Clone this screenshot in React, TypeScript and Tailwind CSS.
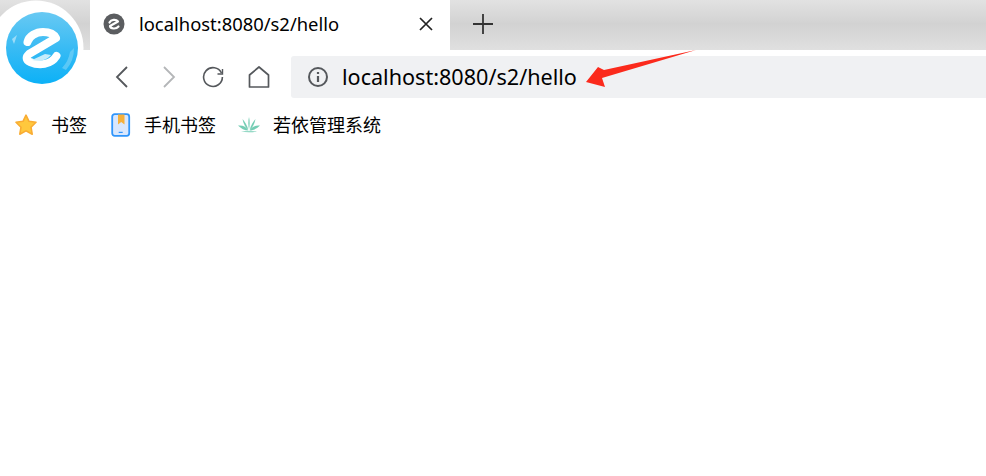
const font = "font-['Noto_Sans','Noto_Sans_CJK_SC',sans-serif]"

const Logo = () => (
  <svg className="absolute left-0 top-0" width="90" height="100" viewBox="0 0 90 100">
    <defs>
      <linearGradient id="ball" x1="0" y1="0" x2="0" y2="1">
        <stop offset="0" stopColor="#68c9f3" />
        <stop offset="0.5" stopColor="#39bbf4" />
        <stop offset="1" stopColor="#0cb1f7" />
      </linearGradient>
    </defs>
    <circle cx="36" cy="48" r="47.5" fill="#fff" />
    <circle cx="42" cy="48" r="36" fill="url(#ball)" />
    <path d="M12 39 L17 35 L14 44 Z" fill="#9bdcf8" />
    <path d="M66 70 A33 33 0 0 0 74 48 L70 52 A30 30 0 0 1 62 68 Z" fill="#7fd3f7" opacity="0.6" />
    <path
      d="M27.5 42 C29 36 36 32 43 32 C49 32 54 34 56 38 L29 54 C25.5 57 26 60.5 30 62 C39 66 51 65 56.5 56"
      fill="none"
      stroke="#fff"
      strokeWidth="8"
      strokeLinecap="round"
      strokeLinejoin="round"
    />
    <path d="M32 60 C40 62 47 60 51 55 L45 54 Z" fill="#c6ecfb" />
  </svg>
)

const Favicon = () => (
  <svg width="22" height="22" viewBox="0 0 22 22">
    <circle cx="11" cy="11" r="10.5" fill="#5b5d60" />
    <path
      d="M6.5 9.5 C8 6.5 13 6 15 8.5 L7 13 C7.5 16 13 16.5 15.5 13.5"
      fill="none"
      stroke="#fff"
      strokeWidth="2.2"
      strokeLinecap="round"
      strokeLinejoin="round"
    />
  </svg>
)

const Star = () => (
  <svg width="24" height="24" viewBox="0 0 24 24">
    <path
      d="M12 2.2 L15 8.3 L22 9.3 L17 14.2 L18.2 21.2 L12 17.9 L5.8 21.2 L7 14.2 L2 9.3 L9 8.3 Z"
      fill="#ffc83d"
      stroke="#f9ac33"
      strokeWidth="1.6"
      strokeLinejoin="round"
    />
  </svg>
)

const PhoneMark = () => (
  <svg width="20" height="24" viewBox="0 0 20 24">
    <rect x="1.2" y="1.2" width="17" height="21.6" rx="2.5" fill="#d9e7fd" stroke="#2f95fb" strokeWidth="1.8" />
    <path d="M7 1.5 H13.5 V11.5 L10.2 9 L7 11.5 Z" fill="#f6b03a" />
    <rect x="7.7" y="18.8" width="4" height="1.2" fill="#2f95fb" />
  </svg>
)

const Plant = () => (
  <svg width="24" height="18" viewBox="0 0 24 18">
    <g fill="#74cdb4">
      <path d="M1 9.5 C6 9 9.5 11 11.5 14.5 C7.5 14.5 4 12.5 1 9.5 Z" />
      <path d="M23 9.5 C18 9 14.5 11 12.5 14.5 C16.5 14.5 20 12.5 23 9.5 Z" />
      <path d="M5.5 3 C8 6 10 9 11.3 13.5 C8.5 12 6.5 8 5.5 3 Z" />
      <path d="M18.5 3 C16 6 14 9 12.7 13.5 C15.5 12 17.5 8 18.5 3 Z" />
      <path d="M12 1 C13 5 12.8 9.5 12 13.5 C11.2 9.5 11 5 12 1 Z" />
      <path d="M4 15.6 C9 15 15 15 20 15.6 C15 16.6 9 16.6 4 15.6 Z" />
    </g>
  </svg>
)

const NavIcons = () => (
  <div className="flex w-[291px] items-center">
    <svg className="ml-[114px]" width="16" height="22" viewBox="0 0 16 22" fill="none" stroke="#55585c" strokeWidth="1.8">
      <path d="M13 1 L3 11 L13 21" />
    </svg>
    <svg className="ml-[31px]" width="16" height="22" viewBox="0 0 16 22" fill="none" stroke="#b4b6b8" strokeWidth="1.8">
      <path d="M3 1 L13 11 L3 21" />
    </svg>
    <svg className="ml-[25px]" width="22" height="22" viewBox="0 0 22 22" fill="none" stroke="#55585c" strokeWidth="1.6">
      <path d="M19.5 7 A9.4 9.4 0 1 0 20.4 11" />
      <path d="M20.5 3 V8 H15.5" strokeWidth="1.4" />
    </svg>
    <svg className="ml-[24px]" width="22" height="22" viewBox="0 0 22 22" fill="none" stroke="#55585c" strokeWidth="1.7">
      <path d="M1.5 9 L11 1 L20.5 9 V21 H1.5 Z" strokeLinejoin="round" />
    </svg>
  </div>
)

const Arrow = () => (
  <svg className="absolute left-[580px] top-[46px]" width="120" height="46" viewBox="0 0 120 46">
    <path d="M116 4 L24 24 L18 21 L6 36 L25 41 L22 32 Z" fill="#fb2a1c" />
  </svg>
)

export default function App() {
  return (
    <div className={`relative h-[476px] w-[986px] overflow-hidden bg-white text-black ${font}`}>
      <div className="flex h-[50px] bg-[linear-gradient(180deg,#e2e2e2_0%,#d2d2d2_48%,#e0e0e0_100%)]">
        <div className="w-[90px]" />
        <div className="flex w-[360px] items-center bg-white pb-[2px] pl-[13px] text-[18.4px]">
          <Favicon />
          <span className="ml-[14px] leading-none">localhost:8080/s2/hello</span>
          <svg className="ml-auto mr-[17px]" width="14" height="14" viewBox="0 0 14 14" stroke="#222" strokeWidth="1.7">
            <path d="M1 1 L13 13 M13 1 L1 13" />
          </svg>
        </div>
        <svg className="ml-[23px] mt-[14px]" width="20" height="20" viewBox="0 0 20 20" stroke="#333" strokeWidth="1.8">
          <path d="M10 0 V20 M0 10 H20" />
        </svg>
      </div>

      <div className="mt-[6px] flex h-[42px]">
        <NavIcons />
        <div className="flex flex-1 items-center rounded-l-[3px] bg-[#f0f1f3] pl-[17px]">
          <svg width="20" height="20" viewBox="0 0 20 20" fill="none" stroke="#55585c" strokeWidth="2">
            <circle cx="10" cy="10" r="9" />
            <path d="M10 9 V15 M10 5 V7" strokeWidth="2.2" />
          </svg>
          <span className="ml-[14px] text-[21.6px] leading-none">localhost:8080/s2/hello</span>
        </div>
      </div>

      <div className="mt-[9px] flex h-[36px] items-center pl-[14px] text-[18px]">
        <Star />
        <span className="ml-[13px]">书签</span>
        <div className="ml-[24px]"><PhoneMark /></div>
        <span className="ml-[13px]">手机书签</span>
        <div className="ml-[21px]"><Plant /></div>
        <span className="ml-[12px]">若依管理系统</span>
      </div>

      <Logo />
      <Arrow />
    </div>
  )
}
